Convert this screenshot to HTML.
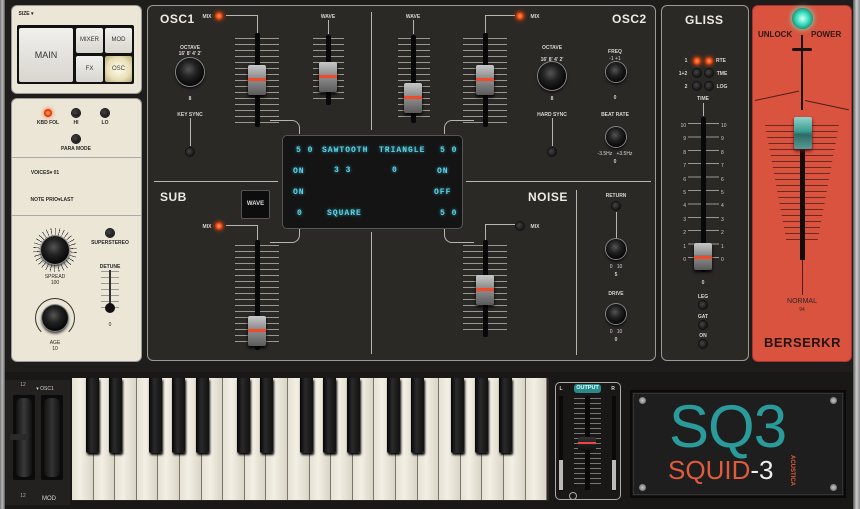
<!DOCTYPE html><html><head><style>
*{margin:0;padding:0;box-sizing:border-box}
body{width:860px;height:509px;background:#1f1d1b;position:relative;overflow:hidden;font-family:"Liberation Sans",sans-serif}
.p{position:absolute}
.t{position:absolute;font-size:5px;font-weight:bold;color:#d8d6d0;white-space:nowrap;transform:translateX(-50%)}
.dk{color:#2a2826}
.h{position:absolute;font-weight:bold;color:#eeeae2;font-size:12px;letter-spacing:.5px}
.knob{position:absolute;border-radius:50%;background:radial-gradient(circle at 45% 40%,#555 0,#222 35%,#080808 70%);box-shadow:0 0 0 1px #888,0 2px 3px #000}
.led{position:absolute;width:8px;height:8px;border-radius:50%;background:radial-gradient(circle at 40% 40%,#444,#050505);box-shadow:0 0 0 1px #111}
.lr{background:radial-gradient(circle,#ffb070 0,#f04010 50%,#801000 100%);box-shadow:0 0 4px #f50}
.tk{position:absolute;background:repeating-linear-gradient(to bottom,#9a9891 0 1px,transparent 1px 6px)}
.tr{position:absolute;width:5px;background:#080808;border-radius:2px}
.hd{position:absolute;width:18px;height:30px;background:linear-gradient(#c8c8c8,#8a8a8a 45%,#555 50%,#888 55%,#5a5a5a);border-radius:2px;box-shadow:0 2px 3px #000}
.hd::after{content:"";position:absolute;left:0;right:0;top:13px;height:3px;background:#f04a2a}
.lcd{position:absolute;font-family:"Liberation Mono",monospace;font-size:8px;color:#5fd0e6;font-weight:bold;letter-spacing:1px;text-shadow:0 0 3px #3ab}
.ln{position:absolute;background:#b9b6ae}
.wk{position:absolute;top:378px;width:21.6px;height:122px;background:linear-gradient(90deg,#e6e1d4,#f3efe4 40%,#d9d4c6);border-right:1px solid #7a766c}
.bk{position:absolute;top:378px;width:13px;height:75px;background:linear-gradient(90deg,#050505,#2a2a2a 40%,#111);border-radius:0 0 2px 2px;box-shadow:1px 2px 2px #000}
</style></head><body>
<!-- side strips -->
<div class="p" style="left:0;top:0;width:5px;height:509px;background:linear-gradient(90deg,#777,#bbb,#555)"></div>
<div class="p" style="left:853px;top:0;width:7px;height:509px;background:linear-gradient(90deg,#555,#ccc,#888)"></div>

<!-- left cream panel 1 -->
<div class="p" style="left:11px;top:5px;width:131px;height:89px;background:#ebe6d6;border:1px solid #999;border-radius:6px"></div>
<div class="t dk" style="left:26px;top:11px">SIZE ▾</div>
<div class="p" style="left:17px;top:25px;width:117px;height:59px;background:#111;border-radius:2px"></div>
<div class="p" style="left:19px;top:28px;width:54px;height:54px;background:linear-gradient(#f2f0ec,#d8d5cf);border-radius:2px;font-size:9px;color:#333;text-align:center;line-height:54px">MAIN</div>
<div class="p" style="left:76px;top:28px;width:27px;height:25px;background:linear-gradient(#f2f0ec,#d8d5cf);border-radius:2px;font-size:6px;color:#333;text-align:center;line-height:25px">MIXER</div>
<div class="p" style="left:105px;top:28px;width:27px;height:25px;background:linear-gradient(#f2f0ec,#d8d5cf);border-radius:2px;font-size:6px;color:#333;text-align:center;line-height:25px">MOD</div>
<div class="p" style="left:76px;top:56px;width:27px;height:26px;background:linear-gradient(#f2f0ec,#d8d5cf);border-radius:2px;font-size:6px;color:#333;text-align:center;line-height:26px">FX</div>
<div class="p" style="left:105px;top:56px;width:27px;height:26px;background:radial-gradient(#fffbea,#e8dfb8 60%,#b8a870);border-radius:2px;font-size:6px;color:#333;text-align:center;line-height:26px">OSC</div>

<!-- left cream panel 2 -->
<div class="p" style="left:11px;top:98px;width:131px;height:264px;background:#ebe6d6;border:1px solid #999;border-radius:6px"></div>
<div class="p" style="left:12px;top:157px;width:129px;height:1px;background:#aaa"></div>
<div class="p" style="left:12px;top:215px;width:129px;height:1px;background:#aaa"></div>
<div class="led lr" style="left:44px;top:109px"></div><div class="t dk" style="left:48px;top:120px">KBD FOL</div>
<div class="led" style="left:72px;top:109px"></div><div class="t dk" style="left:76px;top:120px">HI</div>
<div class="led" style="left:101px;top:109px"></div><div class="t dk" style="left:105px;top:120px">LO</div>
<div class="led" style="left:72px;top:135px"></div><div class="t dk" style="left:76px;top:146px">PARA MODE</div>
<div class="t dk" style="left:45px;top:170px">VOICES▾ 01</div>
<div class="t dk" style="left:52px;top:197px">NOTE PRIO▾LAST</div>
<div class="p" style="left:33px;top:228px;width:44px;height:44px;border-radius:50%;background:repeating-conic-gradient(#333 0 2deg,transparent 2deg 12deg);-webkit-mask:radial-gradient(circle,transparent 14px,#000 15px,#000 22px,transparent 22px)"></div>
<div class="knob" style="left:41px;top:236px;width:28px;height:28px"></div>
<div class="t dk" style="left:55px;top:274px;font-weight:normal">SPREAD</div><div class="t dk" style="left:55px;top:280px;font-weight:normal">100</div>
<div class="p" style="left:35px;top:298px;width:40px;height:40px;border-radius:50%;border:1px solid #333;border-bottom-color:transparent"></div>
<div class="knob" style="left:42px;top:305px;width:26px;height:26px"></div>
<div class="t dk" style="left:55px;top:340px;font-weight:normal">AGE</div><div class="t dk" style="left:55px;top:346px;font-weight:normal">10</div>
<div class="led" style="left:106px;top:229px"></div><div class="t dk" style="left:110px;top:240px">SUPERSTEREO</div>
<div class="t dk" style="left:110px;top:264px">DETUNE</div>
<div class="p" style="left:101px;top:271px;width:18px;height:40px;background:repeating-linear-gradient(to bottom,#999 0 1px,transparent 1px 6px)"></div>
<div class="p" style="left:109px;top:270px;width:2px;height:40px;background:#333"></div>
<div class="p" style="left:105px;top:303px;width:10px;height:10px;border-radius:50%;background:#111"></div>
<div class="t dk" style="left:110px;top:322px;font-weight:normal">0</div>

<!-- main dark panel -->
<div class="p" style="left:147px;top:5px;width:509px;height:356px;background:#2b2926;border:1px solid #9c9990;border-radius:6px"></div>
<div class="h" style="left:160px;top:12px">OSC1</div>
<div class="h" style="left:612px;top:12px">OSC2</div>
<div class="h" style="left:160px;top:190px">SUB</div>
<div class="h" style="left:528px;top:190px">NOISE</div>
<div class="ln" style="left:371px;top:12px;width:1px;height:118px"></div>
<div class="ln" style="left:371px;top:232px;width:1px;height:122px"></div>
<div class="ln" style="left:154px;top:181px;width:124px;height:1px"></div>
<div class="ln" style="left:466px;top:181px;width:185px;height:1px"></div>
<div class="ln" style="left:576px;top:190px;width:1px;height:165px"></div>
<!-- connectors -->
<div class="p" style="left:226px;top:15px;width:32px;height:20px;border:1px solid #b9b6ae;border-bottom:none;border-left:none"></div>
<div class="p" style="left:485px;top:15px;width:30px;height:20px;border:1px solid #b9b6ae;border-bottom:none;border-right:none"></div>
<div class="p" style="left:226px;top:225px;width:32px;height:18px;border:1px solid #b9b6ae;border-bottom:none;border-left:none"></div>
<div class="p" style="left:485px;top:224px;width:30px;height:18px;border:1px solid #b9b6ae;border-bottom:none;border-right:none"></div>
<div class="p" style="left:270px;top:120px;width:30px;height:14px;border:1px solid #b9b6ae;border-left:none;border-bottom:none;border-radius:0 8px 0 0"></div>
<div class="p" style="left:444px;top:120px;width:30px;height:14px;border:1px solid #b9b6ae;border-right:none;border-bottom:none;border-radius:8px 0 0 0"></div>
<div class="p" style="left:270px;top:228px;width:30px;height:15px;border:1px solid #b9b6ae;border-left:none;border-top:none;border-radius:0 0 8px 0"></div>
<div class="p" style="left:444px;top:228px;width:30px;height:15px;border:1px solid #b9b6ae;border-right:none;border-top:none;border-radius:0 0 0 8px"></div>

<!-- OSC1 -->
<div class="led lr" style="left:215px;top:12px"></div><div class="t" style="left:207px;top:14px">MIX</div>
<div class="tk" style="left:235px;top:38px;width:44px;height:86px"></div><div class="tr" style="left:255px;top:33px;height:94px"></div><div class="hd" style="left:248px;top:65px"></div>
<div class="t" style="left:328px;top:14px">WAVE</div><div class="ln" style="left:328px;top:20px;width:1px;height:14px"></div>
<div class="tk" style="left:313px;top:38px;width:31px;height:62px"></div><div class="tr" style="left:326px;top:35px;height:70px"></div><div class="hd" style="left:319px;top:62px"></div>
<div class="t" style="left:190px;top:45px">OCTAVE</div>
<div class="t" style="left:190px;top:51px">16' 8' 4' 2'</div>
<div class="knob" style="left:176px;top:58px;width:28px;height:28px"></div>
<div class="t" style="left:190px;top:96px">8</div>
<div class="t" style="left:190px;top:112px">KEY SYNC</div><div class="ln" style="left:190px;top:118px;width:1px;height:28px"></div>
<div class="led" style="left:186px;top:148px"></div>
<!-- OSC2 -->
<div class="t" style="left:413px;top:14px">WAVE</div><div class="ln" style="left:413px;top:20px;width:1px;height:14px"></div>
<div class="tk" style="left:398px;top:38px;width:32px;height:80px"></div><div class="tr" style="left:411px;top:35px;height:88px"></div><div class="hd" style="left:404px;top:83px"></div>
<div class="led lr" style="left:516px;top:12px"></div><div class="t" style="left:535px;top:14px">MIX</div>
<div class="tk" style="left:463px;top:38px;width:44px;height:86px"></div><div class="tr" style="left:483px;top:33px;height:94px"></div><div class="hd" style="left:476px;top:65px"></div>
<div class="t" style="left:552px;top:45px">OCTAVE</div>
<div class="t" style="left:552px;top:57px">16' 8' 4' 2'</div>
<div class="knob" style="left:538px;top:62px;width:28px;height:28px"></div>
<div class="t" style="left:552px;top:96px">8</div>
<div class="t" style="left:552px;top:112px">HARD SYNC</div><div class="ln" style="left:552px;top:118px;width:1px;height:28px"></div>
<div class="led" style="left:548px;top:148px"></div>
<div class="t" style="left:615px;top:49px">FREQ</div>
<div class="knob" style="left:606px;top:62px;width:20px;height:20px"></div>
<div class="t" style="left:615px;top:56px;font-weight:normal">-1 +1</div>
<div class="t" style="left:615px;top:95px">0</div>
<div class="t" style="left:615px;top:112px">BEAT RATE</div>
<div class="knob" style="left:606px;top:127px;width:20px;height:20px"></div>
<div class="t" style="left:615px;top:151px;font-weight:normal">-3.5Hz &nbsp; +3.5Hz</div>
<div class="t" style="left:615px;top:159px">0</div>
<!-- LCD -->
<div class="p" style="left:282px;top:135px;width:181px;height:94px;background:#141414;border:1px solid #555;border-radius:5px"></div>
<div class="lcd" style="left:296px;top:146px">5 0</div><div class="lcd" style="left:322px;top:146px">SAWTOOTH</div><div class="lcd" style="left:379px;top:146px">TRIANGLE</div><div class="lcd" style="left:440px;top:146px">5 0</div>
<div class="lcd" style="left:293px;top:167px">ON</div><div class="lcd" style="left:334px;top:166px">3 3</div><div class="lcd" style="left:392px;top:166px">0</div><div class="lcd" style="left:437px;top:167px">ON</div>
<div class="lcd" style="left:293px;top:188px">ON</div><div class="lcd" style="left:434px;top:188px">OFF</div>
<div class="lcd" style="left:297px;top:209px">0</div><div class="lcd" style="left:327px;top:209px">SQUARE</div><div class="lcd" style="left:440px;top:209px">5 0</div>
<!-- SUB -->
<div class="p" style="left:241px;top:190px;width:29px;height:29px;background:#0d0d0d;border:1px solid #555;border-radius:2px;font-size:6px;font-weight:bold;color:#ddd;text-align:center;line-height:27px">WAVE</div>
<div class="led lr" style="left:215px;top:222px"></div><div class="t" style="left:207px;top:224px">MIX</div>
<div class="tk" style="left:235px;top:245px;width:44px;height:97px"></div><div class="tr" style="left:255px;top:240px;height:110px"></div><div class="hd" style="left:248px;top:316px"></div>
<!-- NOISE -->
<div class="led" style="left:516px;top:222px"></div><div class="t" style="left:535px;top:224px">MIX</div>
<div class="tk" style="left:463px;top:245px;width:44px;height:90px"></div><div class="tr" style="left:483px;top:240px;height:97px"></div><div class="hd" style="left:476px;top:275px"></div>
<div class="t" style="left:616px;top:193px">RETURN</div><div class="led" style="left:612px;top:202px"></div>
<div class="ln" style="left:616px;top:212px;width:1px;height:30px"></div>
<div class="knob" style="left:606px;top:239px;width:20px;height:20px"></div>
<div class="t" style="left:616px;top:264px;font-weight:normal">0 &nbsp; 10</div><div class="t" style="left:616px;top:272px">5</div>
<div class="t" style="left:616px;top:291px">DRIVE</div>
<div class="knob" style="left:606px;top:304px;width:20px;height:20px"></div>
<div class="t" style="left:616px;top:329px;font-weight:normal">0 &nbsp; 10</div><div class="t" style="left:616px;top:337px">0</div>

<!-- GLISS -->
<div class="p" style="left:661px;top:5px;width:88px;height:356px;background:#2b2926;border:1px solid #9c9990;border-radius:6px"></div>
<div class="h" style="left:685px;top:13px">GLISS</div>
<div class="led lr" style="left:693px;top:57px"></div><div class="led lr" style="left:705px;top:57px"></div>
<div class="led" style="left:693px;top:69px"></div><div class="led" style="left:705px;top:69px"></div>
<div class="led" style="left:693px;top:82px"></div><div class="led" style="left:705px;top:82px"></div>
<div class="t" style="left:686px;top:58px">1</div><div class="t" style="left:683px;top:71px">1+2</div><div class="t" style="left:686px;top:84px">2</div>
<div class="t" style="left:721px;top:58px">RTE</div><div class="t" style="left:722px;top:71px">TME</div><div class="t" style="left:722px;top:84px">LOG</div>
<div class="t" style="left:703px;top:96px">TIME</div><div class="ln" style="left:703px;top:103px;width:1px;height:13px"></div>
<div class="p" style="left:688px;top:123px;width:31px;height:136px;background:repeating-linear-gradient(to bottom,#9a9891 0 1px,transparent 1px 13.4px)"></div>
<div class="tr" style="left:701px;top:117px;height:155px"></div><div class="hd" style="left:694px;top:243px;height:27px"></div>
<div class="p" style="left:678px;top:120px;font-size:5px;color:#ccc;line-height:13.4px;text-align:right;width:8px">10<br>9<br>8<br>7<br>6<br>5<br>4<br>3<br>2<br>1<br>0</div>
<div class="p" style="left:721px;top:120px;font-size:5px;color:#ccc;line-height:13.4px;width:8px">10<br>9<br>8<br>7<br>6<br>5<br>4<br>3<br>2<br>1<br>0</div>
<div class="t" style="left:703px;top:280px">0</div>
<div class="t" style="left:703px;top:294px">LEG</div><div class="led" style="left:699px;top:301px"></div>
<div class="t" style="left:703px;top:314px">GAT</div><div class="led" style="left:699px;top:321px"></div>
<div class="t" style="left:703px;top:333px">ON</div><div class="led" style="left:699px;top:340px"></div>

<!-- red panel -->
<div class="p" style="left:752px;top:5px;width:100px;height:357px;background:#d9533f;border:1px solid #a33;border-radius:6px"></div>
<div class="p" style="left:792px;top:8px;width:21px;height:21px;border-radius:50%;background:radial-gradient(circle,#d8fff4 0,#3de0c0 40%,#178a78 75%,#0d4c44);box-shadow:0 0 6px #6fc"></div>
<div class="p" style="left:758px;top:30px;font-size:8px;font-weight:bold;color:#2a1a16">UNLOCK</div>
<div class="p" style="left:811px;top:30px;font-size:8px;font-weight:bold;color:#2a1a16">POWER</div>
<div class="p" style="left:801px;top:35px;width:2px;height:75px;background:#1a1210"></div>
<div class="p" style="left:792px;top:48px;width:20px;height:3px;background:#1a1210;border-radius:2px"></div>
<div class="p" style="left:755px;top:100px;width:45px;height:1px;background:#4a1f18;transform:rotate(-12deg);transform-origin:left"></div>
<div class="p" style="left:805px;top:100px;width:45px;height:1px;background:#4a1f18;transform:rotate(12deg);transform-origin:left"></div>
<div class="p" style="left:765px;top:125px;width:74px;height:120px;background:repeating-linear-gradient(to bottom,#6a2a20 0 1px,transparent 1px 6px);clip-path:polygon(0 0,100% 0,70% 100%,30% 100%)"></div>
<div class="p" style="left:800px;top:120px;width:5px;height:140px;background:#140c0a"></div>
<div class="p" style="left:802px;top:260px;width:1px;height:35px;background:#4a1f18"></div>
<div class="p" style="left:794px;top:117px;width:18px;height:32px;background:linear-gradient(#8fd4cc,#3b9a90 45%,#2b6a66 55%,#5a9a94);border-radius:2px;box-shadow:0 2px 3px #511"></div>
<div class="t dk" style="left:802px;top:298px;font-size:7px;font-weight:normal">NORMAL</div>
<div class="t dk" style="left:802px;top:307px;font-weight:normal">94</div>
<div class="p" style="left:764px;top:335px;font-size:13px;font-weight:bold;color:#241412;letter-spacing:.5px">BERSERKR</div>

<!-- keyboard area -->
<div class="p" style="left:5px;top:372px;width:848px;height:137px;background:#1a1816"></div>
<div class="p" style="left:5px;top:380px;width:65px;height:125px;background:#232120"></div>
<div class="t" style="left:23px;top:382px;font-weight:normal;color:#aaa">12</div>
<div class="t" style="left:45px;top:386px;font-weight:normal">▾ OSC1</div>
<div class="p" style="left:13px;top:395px;width:22px;height:85px;background:#0b0b0b;border-radius:2px"></div>
<div class="p" style="left:16px;top:398px;width:16px;height:79px;background:linear-gradient(90deg,#111,#3a3a3a 50%,#111);border-radius:6px"></div>
<div class="p" style="left:10px;top:434px;width:18px;height:6px;background:#2a2a2a"></div>
<div class="p" style="left:41px;top:395px;width:22px;height:85px;background:#0b0b0b;border-radius:2px"></div>
<div class="p" style="left:44px;top:398px;width:16px;height:79px;background:linear-gradient(90deg,#111,#333 50%,#111);border-radius:6px"></div>
<div class="t" style="left:23px;top:493px;font-weight:normal;color:#aaa">12</div>
<div class="t" style="left:49px;top:496px;font-size:6px;font-weight:normal">MOD</div>
<div class="p" style="left:72px;top:378px;width:477px;height:123px;background:#2a2724"></div>
<div class="wk" style="left:72px"></div><div class="wk" style="left:93.6px"></div><div class="wk" style="left:115.2px"></div><div class="wk" style="left:136.8px"></div><div class="wk" style="left:158.4px"></div><div class="wk" style="left:180px"></div><div class="wk" style="left:201.6px"></div><div class="wk" style="left:223.2px"></div><div class="wk" style="left:244.8px"></div><div class="wk" style="left:266.4px"></div><div class="wk" style="left:288px"></div><div class="wk" style="left:309.6px"></div><div class="wk" style="left:331.2px"></div><div class="wk" style="left:352.8px"></div><div class="wk" style="left:374.4px"></div><div class="wk" style="left:396px"></div><div class="wk" style="left:417.6px"></div><div class="wk" style="left:439.2px"></div><div class="wk" style="left:460.8px"></div><div class="wk" style="left:482.4px"></div><div class="wk" style="left:504px"></div><div class="wk" style="left:525.6px"></div>
<div class="bk" style="left:86px"></div><div class="bk" style="left:109px"></div><div class="bk" style="left:149px"></div><div class="bk" style="left:172px"></div><div class="bk" style="left:196px"></div>
<div class="bk" style="left:237px"></div><div class="bk" style="left:260px"></div><div class="bk" style="left:300px"></div><div class="bk" style="left:323px"></div><div class="bk" style="left:347px"></div>
<div class="bk" style="left:387px"></div><div class="bk" style="left:411px"></div><div class="bk" style="left:451px"></div><div class="bk" style="left:475px"></div><div class="bk" style="left:499px"></div>

<!-- output -->
<div class="p" style="left:555px;top:382px;width:66px;height:118px;border:1px solid #aaa;border-radius:5px"></div>
<div class="p" style="left:574px;top:384px;width:27px;height:9px;background:#2a8a8a;border-radius:3px;font-size:5.5px;font-weight:bold;color:#dff;text-align:center;line-height:9px">OUTPUT</div>
<div class="t" style="left:561px;top:386px">L</div><div class="t" style="left:613px;top:386px">R</div>
<div class="p" style="left:559px;top:396px;width:4px;height:95px;background:#0a0a0a"></div><div class="p" style="left:559px;top:460px;width:4px;height:30px;background:#bbb"></div>
<div class="p" style="left:612px;top:396px;width:4px;height:95px;background:#0a0a0a"></div><div class="p" style="left:612px;top:460px;width:4px;height:30px;background:#bbb"></div>
<div class="p" style="left:574px;top:398px;width:27px;height:90px;background:repeating-linear-gradient(to bottom,#777 0 1px,transparent 1px 5px)"></div>
<div class="p" style="left:585px;top:396px;width:5px;height:94px;background:#080808"></div>
<div class="p" style="left:578px;top:437px;width:18px;height:13px;background:linear-gradient(#333,#111);border-radius:2px"></div>
<div class="p" style="left:578px;top:442px;width:18px;height:2px;background:#e44"></div>
<div class="p" style="left:569px;top:492px;width:8px;height:8px;border:1px solid #aaa;border-radius:50%"></div>

<!-- logo -->
<div class="p" style="left:630px;top:390px;width:216px;height:108px;background:#161616;border:2px solid #0a0a0a"></div>
<div class="p" style="left:633px;top:393px;width:210px;height:102px;background:#1e1e1e;border:1px solid #333"></div>
<div class="p" style="left:639px;top:397px;width:7px;height:7px;border-radius:50%;background:radial-gradient(#ccc,#555)"></div>
<div class="p" style="left:830px;top:397px;width:7px;height:7px;border-radius:50%;background:radial-gradient(#ccc,#555)"></div>
<div class="p" style="left:639px;top:484px;width:7px;height:7px;border-radius:50%;background:radial-gradient(#ccc,#555)"></div>
<div class="p" style="left:830px;top:484px;width:7px;height:7px;border-radius:50%;background:radial-gradient(#ccc,#555)"></div>
<div class="p" style="left:669px;top:392px;font-size:60px;color:#2b9a9a;font-weight:normal;letter-spacing:-1px;line-height:70px">SQ3</div>
<div class="p" style="left:668px;top:455px;font-size:26px;color:#e05a3e;line-height:30px">SQUID<span style="color:#f0f0f0">-3</span></div>
<div class="p" style="left:795px;top:455px;font-size:6px;font-weight:bold;color:#e05a3e;transform:rotate(90deg);transform-origin:left top">ACUSTICA</div>
</body></html>
